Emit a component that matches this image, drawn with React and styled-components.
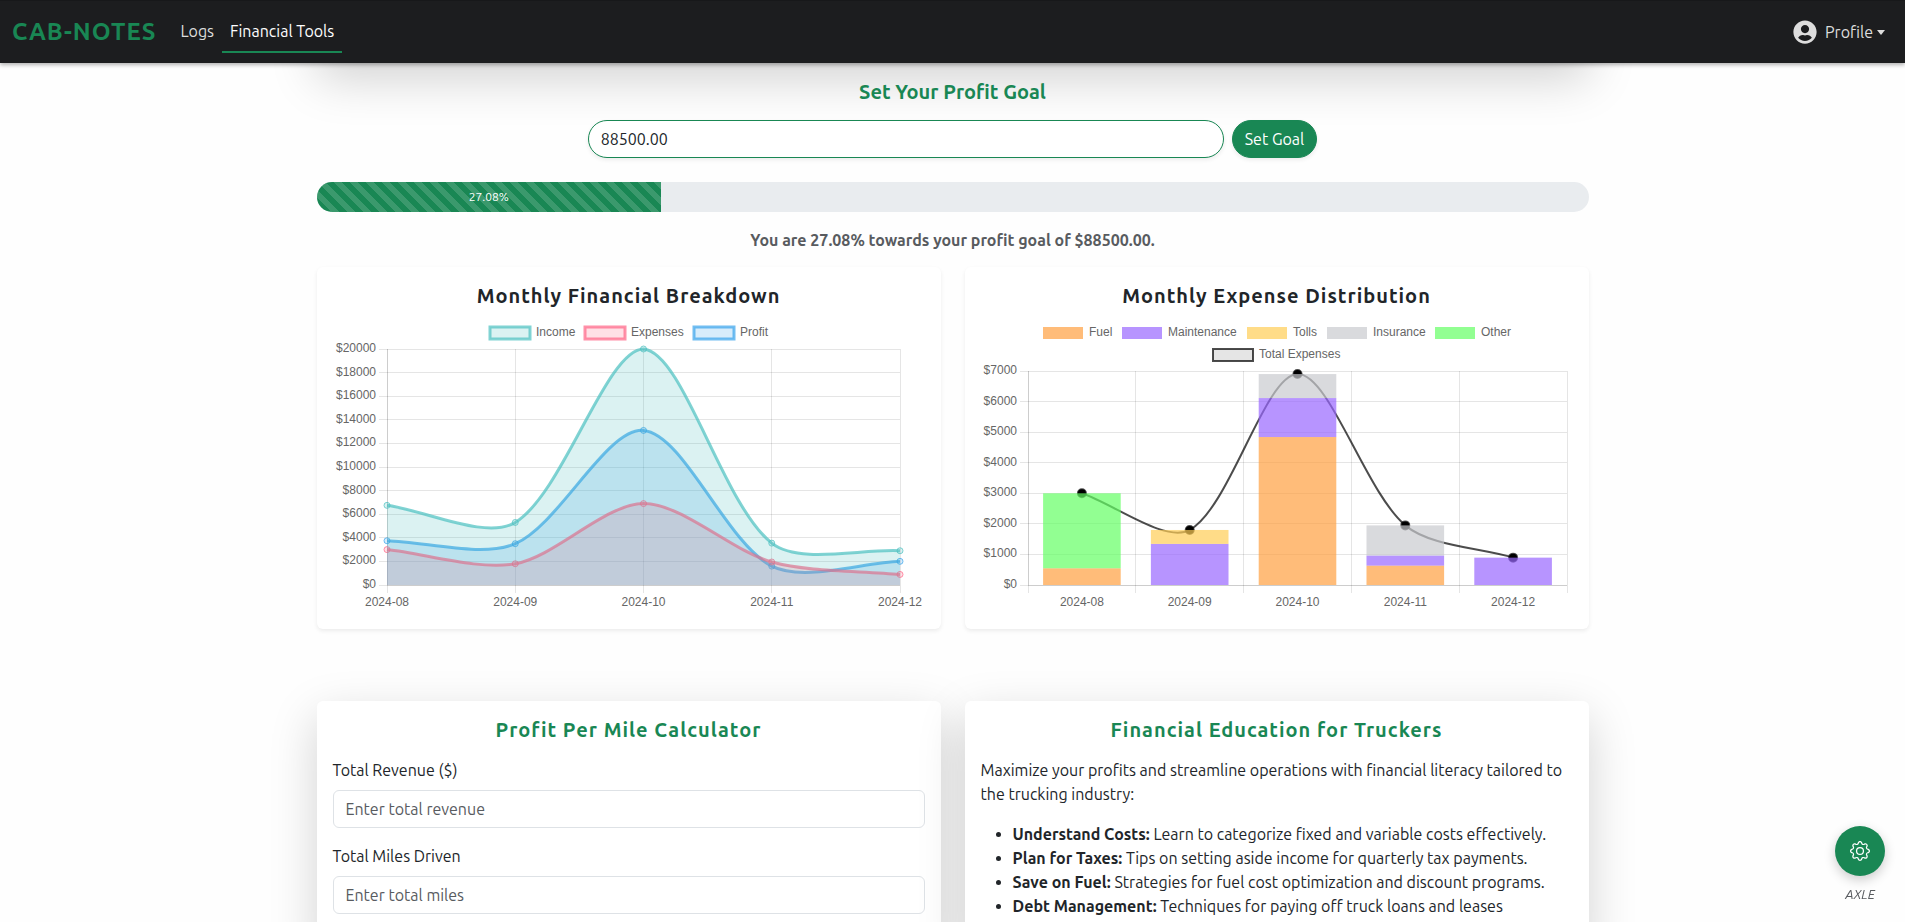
import React from 'react'
import styled, { createGlobalStyle } from 'styled-components'
import { FaUserCircle } from 'react-icons/fa'
import { BsGear } from 'react-icons/bs'

const GlobalStyle = createGlobalStyle`
  *, *::before, *::after {
    box-sizing: border-box;
  }
  body {
    margin: 0;
    background: #fefefe;
    color: #212529;
    font-family: Ubuntu, 'Noto Sans', sans-serif;
    font-size: 16px;
    line-height: 24px;
  }
`
const Navbar = styled.header`
  position: sticky;
  top: 0;
  z-index: 10;
  display: flex;
  align-items: center;
  height: 63px;
  padding: 0 12px;
  background: #1c1d1f;
  border-top: 1px solid #17181a;
  box-shadow: 0 2px 4px rgba(0, 0, 0, 0.3);
`
const Brand = styled.a`
  margin-right: 16px;
  color: #198754;
  font-size: 24px;
  font-weight: 600;
  letter-spacing: 1px;
  text-decoration: none;
`
const NavLinks = styled.nav`
  display: flex;
  flex: 1;
`
const NavLink = styled.a`
  padding: 8px;
  border-bottom: 2px solid ${({ $active }) => ($active ? '#198754' : 'transparent')};
  color: ${({ $active }) => ($active ? '#ffffff' : '#dddddd')};
  text-decoration: none;
`
const ProfileButton = styled.button`
  display: flex;
  align-items: center;
  gap: 8px;
  padding: 8px;
  border: 0;
  background: none;
  color: #dddddd;
  font: inherit;
  cursor: pointer;
`
const Caret = styled.span`
  margin-left: -4px;
  border-top: 5px solid;
  border-left: 4px solid transparent;
  border-right: 4px solid transparent;
`
const Container = styled.main`
  max-width: 1320px;
  margin: 0 auto;
  padding: 0 24px;
`
/* end of the summary panel, tucked under the sticky navbar */
const PanelEnd = styled.div`
  height: 63px;
  margin-top: -63px;
  border-radius: 6px;
  background: #ffffff;
  box-shadow: 0 16px 48px rgba(0, 0, 0, 0.175);
`
const GoalSection = styled.section`
  display: flex;
  flex-direction: column;
  padding-top: 16px;
`
const Title = styled.h2`
  margin: 0 0 ${({ $gap }) => $gap || 16}px;
  color: ${({ $green }) => ($green ? '#198754' : '#212529')};
  font-size: 20px;
  font-weight: 600;
  line-height: 25px;
  text-align: center;
  letter-spacing: ${({ $spaced }) => ($spaced ? '1px' : 'normal')};
`
const GoalForm = styled.form`
  display: flex;
  justify-content: center;
  gap: 8px;
  margin-bottom: 24px;
`
const GoalInput = styled.input`
  width: 50%;
  height: 38px;
  padding: 6px 12px;
  border: 1px solid #198754;
  border-radius: 20px;
  background: #ffffff;
  box-shadow: 0 2px 4px rgba(0, 0, 0, 0.075);
  color: #212529;
  font: inherit;
`
const GoalButton = styled.button`
  padding: 6px 12px;
  border: 1px solid #198754;
  border-radius: 20px;
  background: #198754;
  box-shadow: 0 2px 4px rgba(0, 0, 0, 0.075);
  color: #ffffff;
  font: inherit;
  cursor: pointer;
`
const Progress = styled.div`
  display: flex;
  height: 30px;
  margin-bottom: 16px;
  overflow: hidden;
  border-radius: 15px;
  background: #e9ecef;
`
const ProgressBar = styled.div`
  display: flex;
  align-items: center;
  justify-content: center;
  background-color: #198754;
  background-image: linear-gradient(
    45deg,
    rgba(255, 255, 255, 0.15) 25%,
    transparent 25%,
    transparent 50%,
    rgba(255, 255, 255, 0.15) 50%,
    rgba(255, 255, 255, 0.15) 75%,
    transparent 75%,
    transparent
  );
  background-size: 16px 16px;
  color: #ffffff;
  font-size: 12px;
`
const GoalMessage = styled.p`
  margin: 0 0 15px;
  color: #585b5f;
  font-weight: 600;
  text-align: center;
`
const CardGrid = styled.div`
  display: grid;
  grid-template-columns: 1fr 1fr;
  gap: 24px;
  margin-bottom: 72px;
`
const Card = styled.section`
  padding: 16px;
  border-radius: 6px;
  background: #ffffff;
  box-shadow: ${({ $raised }) =>
    $raised ? '0 16px 48px rgba(0, 0, 0, 0.175)' : '0 2px 4px rgba(0, 0, 0, 0.075)'};
`
const ChartSvg = styled.svg`
  display: block;
  width: 100%;
  height: auto;

  text {
    fill: #666666;
    font-family: 'Liberation Sans', Arial, sans-serif;
    font-size: 12px;
  }
`
const Field = styled.div`
  margin-bottom: 16px;
`
const FieldLabel = styled.label`
  display: block;
  margin-bottom: 8px;
`
const FieldInput = styled.input`
  display: block;
  width: 100%;
  height: 38px;
  padding: 6px 12px;
  border: 1px solid #dee2e6;
  border-radius: 6px;
  background: #ffffff;
  color: #212529;
  font: inherit;

  &::placeholder {
    color: #585b5f;
    opacity: 1;
  }
`
const Intro = styled.p`
  margin: 0 0 16px;
`
const TipList = styled.ul`
  margin: 0 0 16px;
  padding-left: 32px;

  strong {
    font-weight: 600;
  }
`
const Assistant = styled.div`
  position: fixed;
  right: 20px;
  bottom: 16px;
  z-index: 20;
  display: flex;
  flex-direction: column;
  align-items: center;
  gap: 6px;
  color: #585b5f;
  font-size: 13px;
  font-style: italic;
`
const AssistantButton = styled.button`
  display: flex;
  align-items: center;
  justify-content: center;
  width: 50px;
  height: 50px;
  padding: 0;
  border: 0;
  border-radius: 50%;
  background: #198754;
  box-shadow: 0 4px 12px rgba(0, 0, 0, 0.2);
  color: #ffffff;
  cursor: pointer;
`

const months = ['2024-08', '2024-09', '2024-10', '2024-11', '2024-12']

const lines = [
  { name: 'Income', rgb: '75, 192, 192', values: [6750, 5300, 20000, 3550, 2900], swatch: 157 },
  { name: 'Expenses', rgb: '255, 99, 132', values: [3000, 1800, 6900, 1950, 895], swatch: 252 },
  { name: 'Profit', rgb: '54, 162, 235', values: [3750, 3500, 13100, 1600, 2005], swatch: 361 },
]

const categories = [
  { name: 'Fuel', color: 'rgba(255, 159, 64, 0.7)', values: [547, 0, 4840, 634, 0], swatch: 62 },
  { name: 'Maintenance', color: 'rgba(153, 102, 255, 0.7)', values: [0, 1345, 1275, 330, 895], swatch: 141 },
  { name: 'Tolls', color: 'rgba(255, 205, 86, 0.7)', values: [0, 455, 0, 0, 0], swatch: 266 },
  { name: 'Insurance', color: 'rgba(201, 203, 207, 0.7)', values: [0, 0, 785, 986, 0], swatch: 346 },
  { name: 'Other', color: 'rgba(100, 255, 100, 0.7)', values: [2453, 0, 0, 0, 0], swatch: 454 },
]
const totals = [3000, 1800, 6900, 1950, 895]

const clamp = (v, min, max) => Math.max(min, Math.min(max, v))

// cubic spline through the points, tension 0.3, handles kept inside the plot
const spline = (pts, top, bottom) => {
  const handles = pts.map((p, i) => {
    const prev = pts[i - 1] || p
    const next = pts[i + 1] || p
    const d1 = Math.hypot(p.x - prev.x, p.y - prev.y)
    const d2 = Math.hypot(next.x - p.x, next.y - p.y)
    const a = (0.3 * d1) / (d1 + d2)
    const b = (0.3 * d2) / (d1 + d2)
    const dx = next.x - prev.x
    const dy = next.y - prev.y
    return {
      inX: p.x - a * dx,
      inY: clamp(p.y - a * dy, top, bottom),
      outX: p.x + b * dx,
      outY: clamp(p.y + b * dy, top, bottom),
    }
  })
  return pts.reduce((d, p, i) => {
    if (i === 0) return `M${p.x} ${p.y}`
    const h = handles[i - 1]
    const k = handles[i]
    return `${d} C${h.outX} ${h.outY} ${k.inX} ${k.inY} ${p.x} ${p.y}`
  }, '')
}

const Gridlines = ({ ticks, scaleY, left, right, top, bottom, columns }) => (
  <g stroke="rgba(0, 0, 0, 0.1)" shapeRendering="crispEdges">
    {ticks.map(t => (
      <line key={t} x1={left - 8} x2={right} y1={scaleY(t)} y2={scaleY(t)} />
    ))}
    {columns.map(x => (
      <line key={x} x1={x} x2={x} y1={top} y2={bottom + 8} />
    ))}
    <line x1={left} x2={left} y1={top} y2={bottom} />
    <line x1={left} x2={right} y1={bottom} y2={bottom} />
  </g>
)

const BreakdownChart = () => {
  const left = 54
  const right = 567
  const top = 32
  const bottom = 268
  const ticks = Array.from({ length: 11 }, (_, i) => i * 2000)
  const scaleY = v => bottom - (v / 20000) * (bottom - top)
  const xs = months.map((_, i) => left + (i * (right - left)) / 4)

  return (
    <ChartSvg viewBox="0 0 592 296" role="img" aria-label="Monthly Financial Breakdown">
      <Gridlines ticks={ticks} scaleY={scaleY} left={left} right={right} top={top} bottom={bottom} columns={xs} />
      {[...lines].reverse().map(({ name, rgb, values }) => {
        const pts = values.map((v, i) => ({ x: xs[i], y: scaleY(v) }))
        const d = spline(pts, top, bottom)
        return (
          <g key={name}>
            <path d={`${d} L${right} ${bottom} L${left} ${bottom} Z`} fill={`rgba(${rgb}, 0.2)`} />
            <path d={d} fill="none" stroke={`rgba(${rgb}, 0.7)`} strokeWidth="3" />
            {pts.map(p => (
              <circle key={p.x} cx={p.x} cy={p.y} r="3" fill={`rgba(${rgb}, 0.2)`} stroke={`rgba(${rgb}, 0.7)`} />
            ))}
          </g>
        )
      })}
      {lines.map(({ name, rgb, swatch }) => (
        <g key={name}>
          <rect x={swatch} y="10" width="40" height="12" fill={`rgba(${rgb}, 0.2)`} stroke={`rgba(${rgb}, 0.7)`} strokeWidth="3" />
          <text x={swatch + 46} y="19">{name}</text>
        </g>
      ))}
      {ticks.map(t => (
        <text key={t} x="43" y={scaleY(t) + 3} textAnchor="end">${t}</text>
      ))}
      {months.map((m, i) => (
        <text key={m} x={xs[i]} y="289" textAnchor="middle">{m}</text>
      ))}
    </ChartSvg>
  )
}

const ExpenseChart = () => {
  const left = 47
  const right = 586
  const top = 54
  const bottom = 268
  const step = (right - left) / 5
  const barWidth = step * 0.72
  const ticks = Array.from({ length: 8 }, (_, i) => i * 1000)
  const scaleY = v => bottom - (v / 7000) * (bottom - top)
  const xs = months.map((_, i) => left + step * (i + 0.5))
  const edges = Array.from({ length: 6 }, (_, i) => left + step * i)
  const pts = totals.map((v, i) => ({ x: xs[i], y: scaleY(v) }))

  return (
    <ChartSvg viewBox="0 0 592 296" role="img" aria-label="Monthly Expense Distribution">
      <Gridlines ticks={ticks} scaleY={scaleY} left={left} right={right} top={top} bottom={bottom} columns={edges} />
      <path d={spline(pts, top, bottom)} fill="none" stroke="rgba(0, 0, 0, 0.7)" strokeWidth="2" />
      {pts.map(p => (
        <circle key={p.x} cx={p.x} cy={p.y} r="4" fill="#000000" stroke="rgba(0, 0, 0, 0.7)" strokeWidth="2" />
      ))}
      {months.map((m, i) => {
        let base = 0
        return categories.filter(c => c.values[i] > 0).map(c => {
          base += c.values[i]
          return (
            <rect
              key={m + c.name}
              x={xs[i] - barWidth / 2}
              y={scaleY(base)}
              width={barWidth}
              height={bottom - scaleY(c.values[i])}
              fill={c.color}
            />
          )
        })
      })}
      {categories.map(({ name, color, swatch }) => (
        <g key={name}>
          <rect x={swatch} y="10" width="40" height="12" fill={color} />
          <text x={swatch + 46} y="19">{name}</text>
        </g>
      ))}
      <rect x="232" y="32" width="40" height="12" fill="rgba(0, 0, 0, 0.1)" stroke="rgba(0, 0, 0, 0.7)" strokeWidth="2" />
      <text x="278" y="41">Total Expenses</text>
      {ticks.map(t => (
        <text key={t} x="36" y={scaleY(t) + 3} textAnchor="end">${t}</text>
      ))}
      {months.map((m, i) => (
        <text key={m} x={xs[i]} y="289" textAnchor="middle">{m}</text>
      ))}
    </ChartSvg>
  )
}

const App = () => {
  const [goal, setGoal] = React.useState('88500.00')
  const [revenue, setRevenue] = React.useState('')
  const [miles, setMiles] = React.useState('')
  const percent = 27.08

  return (
    <>
      <GlobalStyle />
      <Navbar>
        <Brand href="#home">CAB-NOTES</Brand>
        <NavLinks>
          <NavLink href="#logs">Logs</NavLink>
          <NavLink href="#tools" $active>Financial Tools</NavLink>
        </NavLinks>
        <ProfileButton type="button">
          <FaUserCircle size={24} />
          Profile
          <Caret />
        </ProfileButton>
      </Navbar>

      <Container>
        <PanelEnd />
        <GoalSection>
          <Title $green>Set Your Profit Goal</Title>
          <GoalForm onSubmit={e => e.preventDefault()}>
            <GoalInput aria-label="Profit goal" value={goal} onChange={e => setGoal(e.target.value)} />
            <GoalButton type="submit">Set Goal</GoalButton>
          </GoalForm>
          <Progress>
            <ProgressBar role="progressbar" aria-valuenow={percent} style={{ width: `${percent}%` }}>
              {percent}%
            </ProgressBar>
          </Progress>
          <GoalMessage>You are {percent}% towards your profit goal of $88500.00.</GoalMessage>
        </GoalSection>

        <CardGrid>
          <Card>
            <Title $spaced $gap={9}>Monthly Financial Breakdown</Title>
            <BreakdownChart />
          </Card>
          <Card>
            <Title $spaced $gap={9}>Monthly Expense Distribution</Title>
            <ExpenseChart />
          </Card>
        </CardGrid>

        <CardGrid>
          <Card $raised>
            <Title $green $spaced>Profit Per Mile Calculator</Title>
            <Field>
              <FieldLabel htmlFor="revenue">Total Revenue ($)</FieldLabel>
              <FieldInput
                id="revenue"
                placeholder="Enter total revenue"
                value={revenue}
                onChange={e => setRevenue(e.target.value)}
              />
            </Field>
            <Field>
              <FieldLabel htmlFor="miles">Total Miles Driven</FieldLabel>
              <FieldInput
                id="miles"
                placeholder="Enter total miles"
                value={miles}
                onChange={e => setMiles(e.target.value)}
              />
            </Field>
          </Card>
          <Card $raised>
            <Title $green $spaced>Financial Education for Truckers</Title>
            <Intro>
              Maximize your profits and streamline operations with financial literacy tailored to
              the trucking industry:
            </Intro>
            <TipList>
              <li><strong>Understand Costs:</strong> Learn to categorize fixed and variable costs effectively.</li>
              <li><strong>Plan for Taxes:</strong> Tips on setting aside income for quarterly tax payments.</li>
              <li><strong>Save on Fuel:</strong> Strategies for fuel cost optimization and discount programs.</li>
              <li><strong>Debt Management:</strong> Techniques for paying off truck loans and leases</li>
            </TipList>
          </Card>
        </CardGrid>
      </Container>

      <Assistant>
        <AssistantButton type="button" aria-label="Open Axle assistant">
          <BsGear size={20} />
        </AssistantButton>
        AXLE
      </Assistant>
    </>
  )
}

export default App
